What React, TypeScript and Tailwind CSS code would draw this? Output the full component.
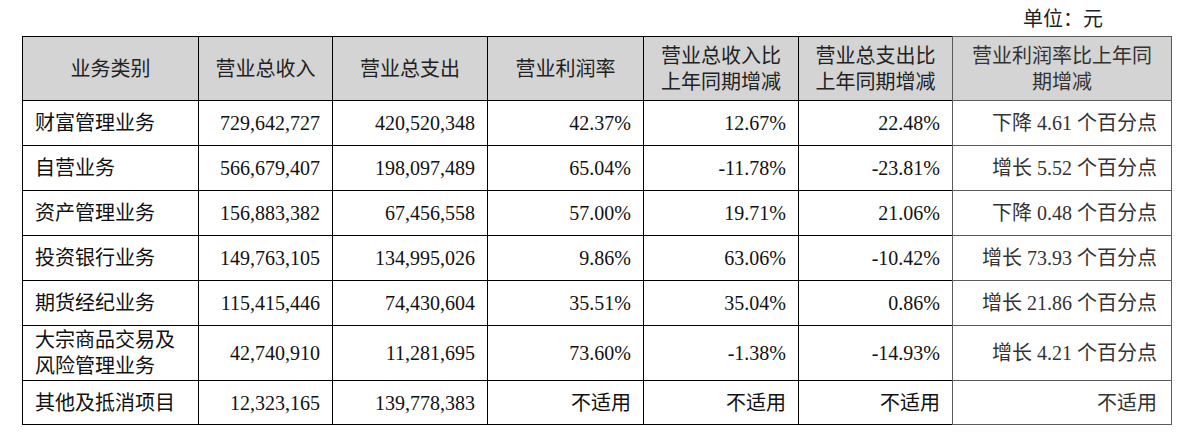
import React from "react";

type Row = {
  name: string[];
  income: string;
  expense: string;
  margin: string;
  incomeChg: string;
  expenseChg: string;
  marginChg: string;
  tall?: boolean;
};

const rows: Row[] = [
  { name: ["财富管理业务"], income: "729,642,727", expense: "420,520,348", margin: "42.37%", incomeChg: "12.67%", expenseChg: "22.48%", marginChg: "下降 4.61 个百分点" },
  { name: ["自营业务"], income: "566,679,407", expense: "198,097,489", margin: "65.04%", incomeChg: "-11.78%", expenseChg: "-23.81%", marginChg: "增长 5.52 个百分点" },
  { name: ["资产管理业务"], income: "156,883,382", expense: "67,456,558", margin: "57.00%", incomeChg: "19.71%", expenseChg: "21.06%", marginChg: "下降 0.48 个百分点" },
  { name: ["投资银行业务"], income: "149,763,105", expense: "134,995,026", margin: "9.86%", incomeChg: "63.06%", expenseChg: "-10.42%", marginChg: "增长 73.93 个百分点" },
  { name: ["期货经纪业务"], income: "115,415,446", expense: "74,430,604", margin: "35.51%", incomeChg: "35.04%", expenseChg: "0.86%", marginChg: "增长 21.86 个百分点" },
  { name: ["大宗商品交易及", "风险管理业务"], income: "42,740,910", expense: "11,281,695", margin: "73.60%", incomeChg: "-1.38%", expenseChg: "-14.93%", marginChg: "增长 4.21 个百分点", tall: true },
  { name: ["其他及抵消项目"], income: "12,323,165", expense: "139,778,383", margin: "不适用", incomeChg: "不适用", expenseChg: "不适用", marginChg: "不适用" },
];

const cell = "border-l border-b border-black align-middle";
const num = `${cell} text-right pr-3`;
const last = "border-l border-r border-b border-[#5a5a5a] align-middle text-right pr-[14px] text-[#333]";

export default function App() {
  return (
    <div className="w-[1182px] h-[444px] bg-white text-[#111] text-[20px] font-['Liberation_Serif','Noto_Sans_CJK_SC',serif]">
      <div className="h-[36px] flex items-center justify-end pr-[79px] pt-[2px] leading-none text-[#222]">
        单位：元
      </div>
      <table className="ml-[22px] table-fixed border-separate border-spacing-0 w-[1150px]">
        <colgroup>
          <col className="w-[176px]" />
          <col className="w-[134px]" />
          <col className="w-[155px]" />
          <col className="w-[156px]" />
          <col className="w-[155px]" />
          <col className="w-[154px]" />
          <col className="w-[220px]" />
        </colgroup>
        <thead>
          <tr className="h-[65px] bg-[#d4d4d4] text-[#222] leading-[26px]">
            <th className={`${cell} border-t font-normal text-center`}>业务类别</th>
            <th className={`${cell} border-t font-normal text-center`}>营业总收入</th>
            <th className={`${cell} border-t font-normal text-center`}>营业总支出</th>
            <th className={`${cell} border-t font-normal text-center`}>营业利润率</th>
            <th className={`${cell} border-t font-normal text-center`}>
              营业总收入比
              <br />
              上年同期增减
            </th>
            <th className={`${cell} border-t font-normal text-center`}>
              营业总支出比
              <br />
              上年同期增减
            </th>
            <th className="border border-[#5a5a5a] font-normal text-center align-middle text-[#333]">
              营业利润率比上年同
              <br />
              期增减
            </th>
          </tr>
        </thead>
        <tbody>
          {rows.map((r, i) => (
            <tr key={i} className={r.tall ? "h-[55px] leading-[26px]" : i === rows.length - 1 ? "h-[44px]" : "h-[45px]"}>
              <td className={`${cell} pl-3 text-left`}>
                {r.name.map((n, j) => (
                  <div key={j}>{n}</div>
                ))}
              </td>
              <td className={num}>{r.income}</td>
              <td className={num}>{r.expense}</td>
              <td className={num}>{r.margin}</td>
              <td className={num}>{r.incomeChg}</td>
              <td className={num}>{r.expenseChg}</td>
              <td className={last}>{r.marginChg}</td>
            </tr>
          ))}
        </tbody>
      </table>
    </div>
  );
}
